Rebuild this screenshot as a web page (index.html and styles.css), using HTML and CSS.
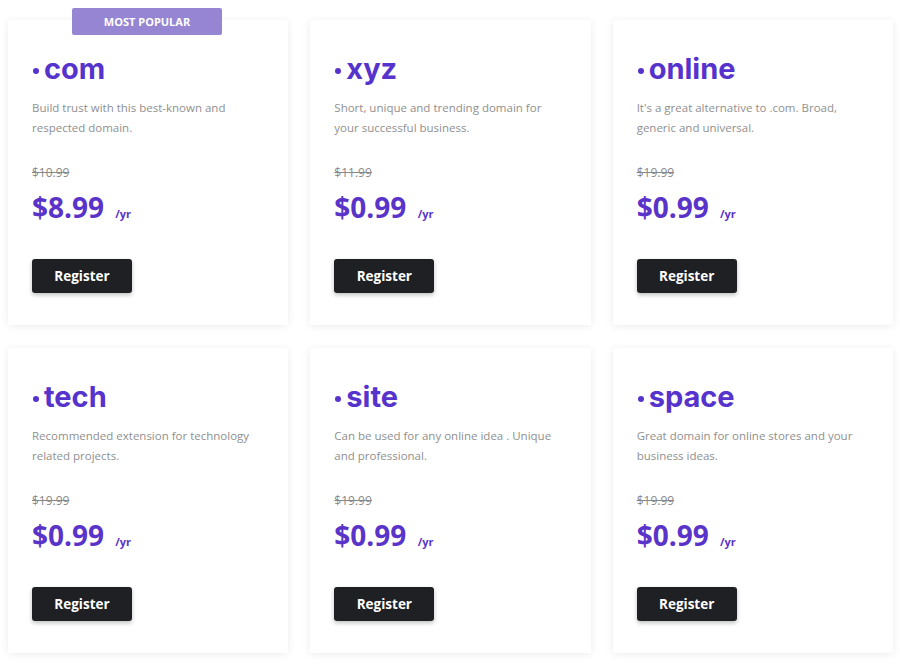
FILE: index.html
```html
<!DOCTYPE html>
<html lang="en">
<head>
    <meta charset="UTF-8">
    <meta name="viewport" content="width=device-width, initial-scale=1.0">
    <title>Domain Pricing</title>
    <link rel="stylesheet" href="styles.css">
</head>
<body>

    <div class="plans">
        <div class="plan">
            <span class="badge">Most Popular</span>
            <h2 class="tld">com</h2>
            <p class="desc">Build trust with this best-known and respected domain.</p>
            <p class="old-price">$10.99</p>
            <p class="price">$8.99 <span class="per">/yr</span></p>
            <button class="register">Register</button>
        </div>

        <div class="plan">
            <h2 class="tld">xyz</h2>
            <p class="desc">Short, unique and trending domain for your successful business.</p>
            <p class="old-price">$11.99</p>
            <p class="price">$0.99 <span class="per">/yr</span></p>
            <button class="register">Register</button>
        </div>

        <div class="plan">
            <h2 class="tld">online</h2>
            <p class="desc">It's a great alternative to .com. Broad, generic and universal.</p>
            <p class="old-price">$19.99</p>
            <p class="price">$0.99 <span class="per">/yr</span></p>
            <button class="register">Register</button>
        </div>

        <div class="plan">
            <h2 class="tld">tech</h2>
            <p class="desc">Recommended extension for technology related projects.</p>
            <p class="old-price">$19.99</p>
            <p class="price">$0.99 <span class="per">/yr</span></p>
            <button class="register">Register</button>
        </div>

        <div class="plan">
            <h2 class="tld">site</h2>
            <p class="desc">Can be used for any online idea . Unique and professional.</p>
            <p class="old-price">$19.99</p>
            <p class="price">$0.99 <span class="per">/yr</span></p>
            <button class="register">Register</button>
        </div>

        <div class="plan">
            <h2 class="tld">space</h2>
            <p class="desc">Great domain for online stores and your business ideas.</p>
            <p class="old-price">$19.99</p>
            <p class="price">$0.99 <span class="per">/yr</span></p>
            <button class="register">Register</button>
        </div>
    </div>

</body>
</html>
```

FILE: styles.css
```css
body {
    margin: 0;
    background: #fff;
    font-family: "Open Sans", "Noto Sans", Arial, sans-serif;
}
.plans {
    display: grid;
    grid-template-columns: repeat(3, 1fr);
    gap: 23px 22px;
    padding: 20px 7px 9px 8px;
}
.plan {
    position: relative;
    background: #fff;
    padding: 0 24px 32px;
    box-shadow: 0 1px 8px rgba(0, 0, 0, 0.08);
}
.badge {
    position: absolute;
    top: -12px;
    left: 64px;
    width: 150px;
    height: 27px;
    line-height: 27px;
    text-align: center;
    background: #9585d2;
    color: #fff;
    font-size: 11px;
    font-weight: 700;
    text-transform: uppercase;
    border-radius: 2px;
}
.tld {
    margin: 32px 0 0;
    font-family: Inter, "Open Sans", sans-serif;
    font-size: 29px;
    font-weight: 700;
    line-height: 34px;
    color: #5533cc;
    display: flex;
    align-items: center;
}
.tld::before {
    content: "";
    width: 6px;
    height: 6px;
    border-radius: 50%;
    background: #5533cc;
    margin: 4px 5px 0 1px;
}
.desc {
    margin: 12px 0 0;
    font-size: 11.5px;
    line-height: 19.5px;
    color: #8f8f8f;
}
.old-price {
    margin: 27px 0 0;
    font-size: 12px;
    line-height: 18px;
    color: #888;
    text-decoration: line-through;
}
.price {
    margin: 7px 0 0;
    font-size: 28px;
    font-weight: 700;
    line-height: 36px;
    color: #5a34c9;
}
.per {
    font-size: 11px;
    line-height: 1;
    margin-left: 4px;
}
.register {
    display: block;
    margin-top: 34px;
    width: 100px;
    height: 34px;
    background: #1f2024;
    color: #fff;
    border: none;
    border-radius: 3px;
    font-family: "Open Sans", sans-serif;
    font-size: 13.5px;
    font-weight: 700;
    box-shadow: 0 2px 4px rgba(0, 0, 0, 0.25);
    cursor: pointer;
}
```
